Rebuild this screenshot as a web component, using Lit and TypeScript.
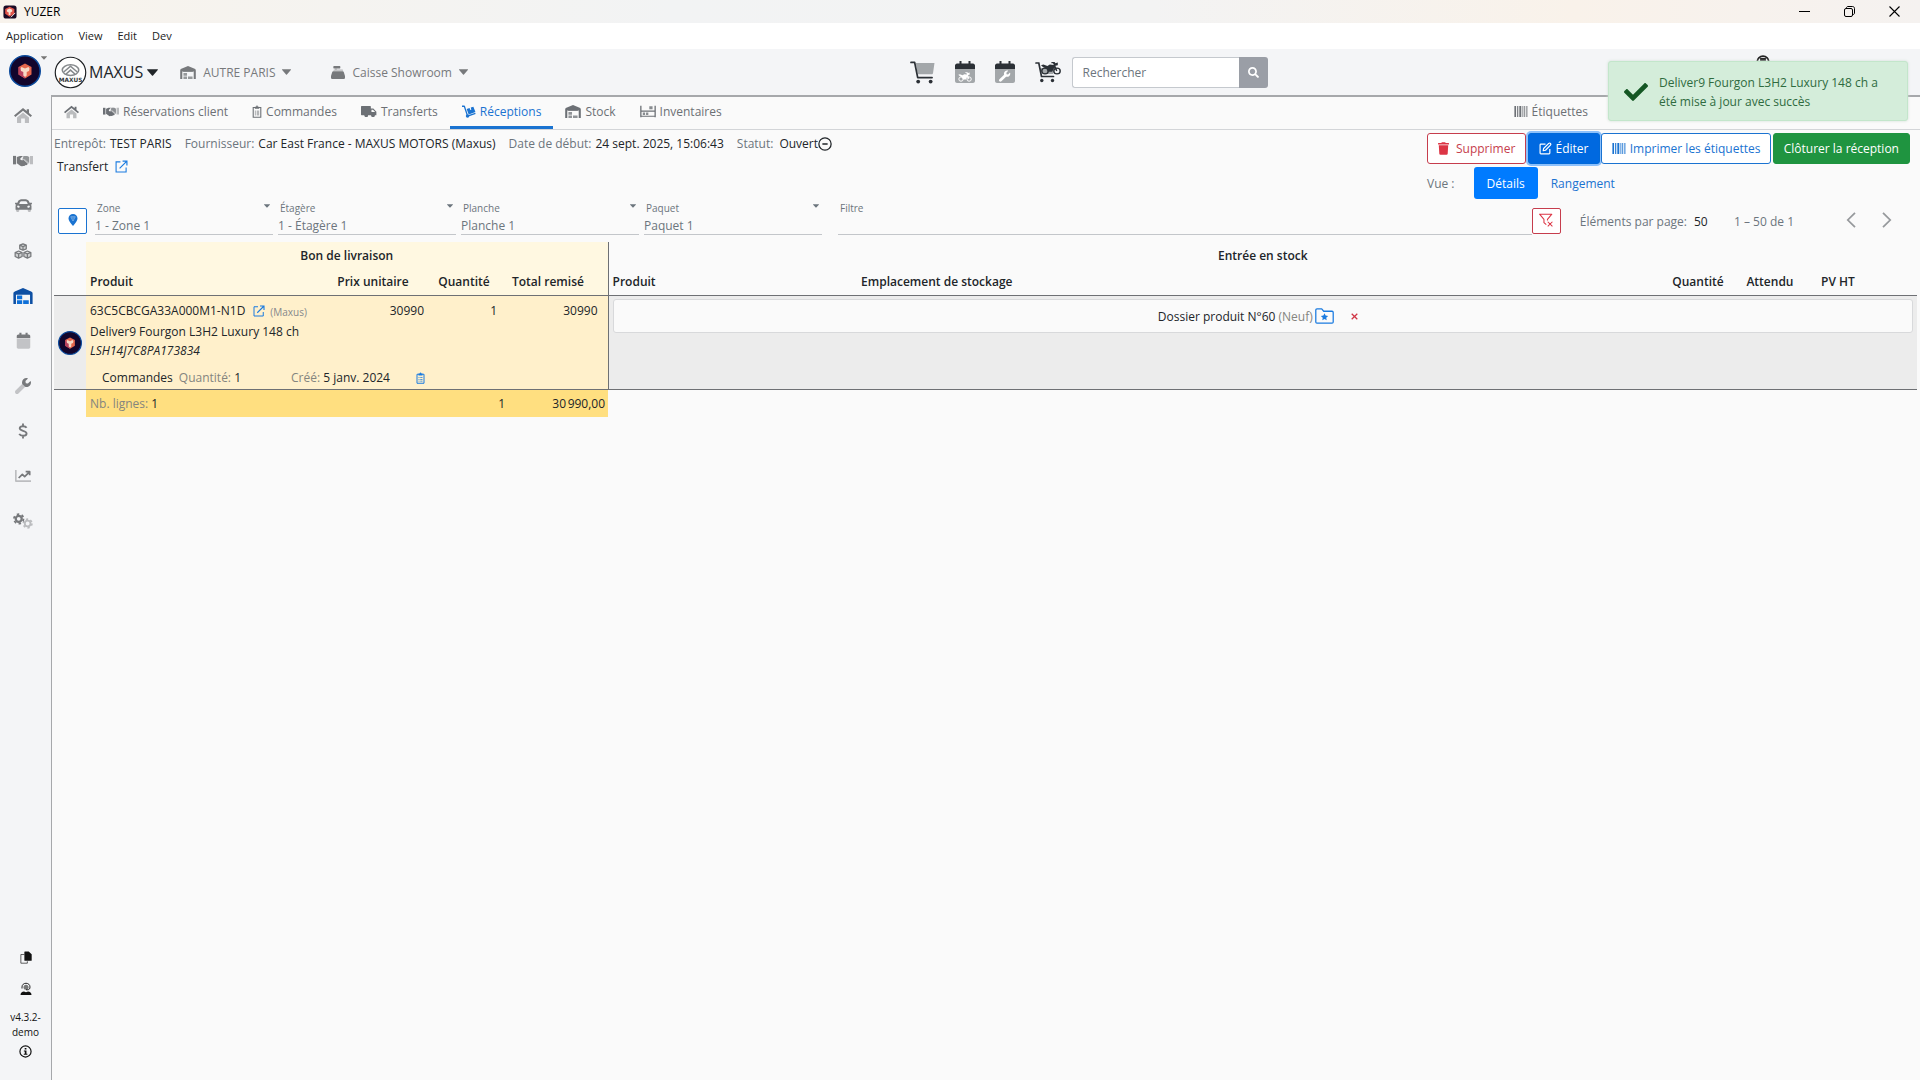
import { LitElement, html, svg, css, TemplateResult } from "lit";
import { customElement, property } from "lit/decorators.js";

type Icon = { box: string; body: unknown };

const WRENCH =
  "M507.7 109.1c-2.2-9-13.5-12.1-20.1-5.5l-74.4 74.4-67.9-11.3-11.3-67.9 74.4-74.4c6.6-6.6 3.4-17.9-5.7-20.2-47.4-11.7-99.6.9-136.6 37.9-39.6 39.6-50.6 97.1-34.1 147.2L18.7 402.8c-25 25-25 65.5 0 90.5 25 25 65.5 25 90.5 0l213.2-213.2c50.1 16.7 107.5 5.7 147.4-34.2 37.1-37.1 49.7-89.3 37.9-136.8z";

const motorbike = svg`
  <circle cx="5" cy="14" r="4" fill="none" stroke="currentColor" stroke-width="1.8"/>
  <circle cx="20" cy="14" r="4" fill="none" stroke="currentColor" stroke-width="1.8"/>
  <path d="M0 6l3-1 5 2 3-2 5 .5L15 3h-2V1.5h4L18 3l3-1v4l-3 .5 2.500 7-1.500.8-2.500-4.800-2.500 5.500H9L7 11 2 8z"/>`;

const ICONS: Record<string, Icon> = {
  home: {
    box: "0 0 24 22",
    body: svg`<path opacity=".45" d="M12 7 4 13.500V21h5.500v-6h5v6H20v-7.500z"/>
      <path d="M12 1 0 11l1.800 2L12 4.700 22.200 13 24 11l-4-3.400V2.500h-3v2.600z"/>`,
  },
  hands: {
    box: "0 0 26 16",
    body: svg`<path d="M0 2h4v11H0z"/><path opacity=".45" d="M22 2h4v11h-4zM14 2h4l3 1.500V12h-2l-6-6z"/>
      <path d="M5 3.500 9 2h4L9.500 5.500c-.5 2 2 3 4 1.500l5.500 5c0 2-1.500 2.500-2.500 2-1 1.500-2.500 1.500-3.500 1-1.500 1-3 .5-4-.5L5.500 12H5z"/>
      <path opacity=".6" d="M13.500 2h5l2.500 1.500V11l-6-5-3 1z"/>`,
  },
  car: {
    box: "0 0 512 512",
    body: svg`<path opacity=".45" d="M32 350h96v66a32 32 0 0 1-32 32H64a32 32 0 0 1-32-32zM384 350h96v66a32 32 0 0 1-32 32h-32a32 32 0 0 1-32-32z"/>
      <path fill-rule="evenodd" d="M500 176h-60l-16.500-41.600C406.400 91.600 365.600 64 319.500 64h-127c-46 0-86.900 27.600-104 70.400L71.900 176H12c-7.800 0-13.500 7.300-11.600 14.900l6 24C7.700 220.200 12.500 224 18 224h20c-13.400 11.700-22 28.800-22 48v112h480V272c0-19.200-8.700-36.300-22.100-48H494c5.500 0 10.300-3.800 11.600-9.100l6-24c1.900-7.600-3.800-14.900-11.600-14.900zM148 158c7.300-18.200 25-30 44.500-30h127c19.600 0 37.300 11.800 44.500 30l20 50H128zM96 320a32 32 0 1 1 0-64c19 0 48 29 48 48s-29 16-48 16zm320 0c-19 0-48 3-48-16s29-48 48-48a32 32 0 1 1 0 64z"/>`,
  },
  boxes: {
    box: "0 0 24 22",
    body: svg`<g fill="currentColor" fill-opacity=".3" stroke="currentColor" stroke-width="1.7" stroke-linejoin="round">
      <path d="M12 1.200 16.500 3v5L12 10 7.500 8V3zM7.500 3 12 5l4.500-2M12 5v5"/>
      <path d="M6 11l4.800 2v5.500L6 20.800l-4.800-2.300V13zM1.200 13 6 15l4.800-2M6 15v5.800"/>
      <path d="M18 11l4.800 2v5.500L18 20.800l-4.800-2.300V13zM13.200 13l4.800 2 4.800-2M18 15v5.800"/></g>`,
  },
  warehouse: {
    box: "0 0 24 20",
    body: svg`<path d="M0 20V7c0-1.200.5-2 1.800-2.600L12 0l10.200 4.400C23.500 5 24 5.800 24 7v13h-3.200V8.500H3.200V20z"/>
      <path opacity=".75" d="M4.500 7.500h15V9.200h-15zM5 10.800h5.500V15H5zM5 16h5.500v4H5zM12 16h7v4h-7z"/>`,
  },
  warehouseActive: {
    box: "0 0 24 20",
    body: svg`<path fill="#0d4fa3" d="M0 20V7c0-1.200.5-2 1.800-2.600L12 0l10.200 4.400C23.500 5 24 5.800 24 7v13h-3.200V8.500H3.200V20z"/>
      <path fill="#0d6fd8" d="M4.500 9.500h6.500V14H4.500zM4.500 15.200h6.500V20H4.500zM12.200 15.200h7V20h-7z"/>`,
  },
  calendar: {
    box: "0 0 20 22",
    body: svg`<path opacity=".4" d="M1 9h18v11c0 1-1 2-2 2H3c-1 0-2-1-2-2z"/>
      <path d="M1 8V5c0-1 1-2 2-2h1.500V.5h2.800V3h5.400V.5h2.800V3H17c1 0 2 1 2 2v3z"/>`,
  },
  wrench: {
    box: "0 0 512 512",
    body: svg`<path opacity=".4" d="M236 184 18.700 402.800c-25 25-25 65.500 0 90.500 25 25 65.500 25 90.500 0L328 276z"/>
      <path d="M507.700 109.100c-2.200-9-13.500-12.100-20.100-5.500l-74.400 74.400-67.900-11.300-11.300-67.900 74.400-74.400c6.600-6.600 3.400-17.900-5.700-20.200-47.400-11.700-99.600.9-136.600 37.900-39.600 39.600-50.600 97.100-34.100 147.200l90 91c50.100 16.700 107.500 5.700 147.400-34.200 37.100-37.100 49.700-89.300 37.900-136.800z"/>`,
  },
  dollar: {
    box: "0 0 14 22",
    body: svg`<path fill="none" stroke="currentColor" stroke-width="2.6" d="M12 6.500C11 4.800 9.500 4.300 7 4.300c-3 0-4.600 1-4.600 3 0 4.500 9.600 2.400 9.600 7.200 0 2-1.800 3.200-5 3.200-2.500 0-4.300-.8-5.300-2.700M7 .5v3.800M7 17.700v3.800"/>`,
  },
  chart: {
    box: "0 0 24 20",
    body: svg`<path opacity=".45" d="M0 1h2.500v15.500H24V19H2c-1.200 0-2-.8-2-2z"/>
      <path fill="none" stroke="currentColor" stroke-width="2.6" stroke-linejoin="round" d="M5.500 13 11 7.500l3.500 3.500L21 4.500M16 3.500h6V9"/>`,
  },
  gears: {
    box: "0 0 28 22",
    body: svg`<g fill="none" stroke="currentColor"><circle cx="8" cy="8" r="4.200" stroke-width="3.2"/>
      <circle cx="8" cy="8" r="6.700" stroke-width="2.5" stroke-dasharray="3.500 3.500"/>
      <g opacity=".45"><circle cx="20.500" cy="14.500" r="4" stroke-width="2.6"/>
      <circle cx="20.500" cy="14.500" r="6" stroke-width="2.4" stroke-dasharray="3.140 3.140"/></g></g>`,
  },
  copy: {
    box: "0 0 22 24",
    body: svg`<path fill="none" stroke="currentColor" stroke-width="1.2" d="M8 6.500H1.500v16h12V19"/>
      <path d="M9 1h7l5.500 5v11c0 .6-.4 1-1 1H9c-.6 0-1-.4-1-1V2c0-.6.4-1 1-1z"/>`,
  },
  headset: {
    box: "0 0 24 26",
    body: svg`<path fill="none" stroke="currentColor" stroke-width="1.8" d="M4 12V9c0-4.500 3.500-7.500 8-7.500s8 3 8 7.500c0 3.500-1.500 5.500-5 5.500h-3"/>
      <circle cx="12" cy="9.500" r="5" opacity=".55"/><path d="M1 25c0-4.500 3-7 7-7l4 1.500L16 18c4 0 7 2.500 7 7z"/>`,
  },
  info: {
    box: "0 0 24 24",
    body: svg`<circle cx="12" cy="12" r="10.300" fill="none" stroke="currentColor" stroke-width="2.2"/>
      <path d="M10.500 5.500h3.200v3h-3.200zM9 10h4.800v6H15.500v2H8.800v-2h1.900v-4H9z"/>`,
  },
  register: {
    box: "0 0 24 22",
    body: svg`<path d="M5 0h10c.6 0 1 .4 1 1v2c0 .6-.4 1-1 1H5c-.6 0-1-.4-1-1V1c0-.6.4-1 1-1zM4 9h16c1 0 1.700.5 2 1.500L24 17v3.500c0 .8-.7 1.500-1.500 1.500h-21C.7 22 0 21.300 0 20.500V17l2-6.500C2.300 9.500 3 9 4 9z"/>
      <path opacity=".5" d="M7 4h3v2h10l.8 2H4l1-2h2z"/>`,
  },
  clipboard: {
    box: "0 0 18 24",
    body: svg`<path fill="none" stroke="currentColor" stroke-width="2" d="M2 4.500h14V22.500H2z"/>
      <path d="M5 3h2.500c0-1.200.6-2 1.500-2s1.500.8 1.500 2H13v4H5zM5 10.500h2V12H5zm3.500 0H13V12H8.500zM5 14h2v1.500H5zm3.500 0H13v1.500H8.500zM5 17.500h2V19H5zm3.500 0H13V19H8.500z"/>`,
  },
  truck: {
    box: "0 0 26 20",
    body: svg`<path fill-rule="evenodd" d="M1 1h14c.6 0 1 .4 1 1v3h4l5 5.500V16h-2.500a3 3 0 0 1-6 0h-5a3 3 0 0 1-6 0H1c-.6 0-1-.4-1-1V2c0-.6.4-1 1-1zm16 6v4h6l-3.600-4z"/>
      <circle cx="8.500" cy="16.500" r="2.500"/><circle cx="19.500" cy="16.500" r="2.500"/>`,
  },
  dolly: {
    box: "0 0 24 22",
    body: svg`<path fill="none" stroke="currentColor" stroke-width="2.2" stroke-linejoin="round" d="M0 2h4l5 15M12 18l11-3.800"/>
      <circle cx="9.500" cy="18.500" r="3"/><path d="M8 6.500 13 5l1.200 3.500L16 8l-1-3.700L19.500 3 23 12l-11.500 4z"/>`,
  },
  shelves: {
    box: "0 0 24 20",
    body: svg`<path d="M0 1h2v18H0zM22 1h2v18h-2zM2 8.500h20v1.800H2zM2 16.500h20V18H2z"/>
      <path opacity=".8" d="M14 2h5v4.500h-5zM4 11.500h3.500v4H4zM9 11.500h3.500v4H9z"/>`,
  },
  barcode: {
    box: "0 0 24 20",
    body: svg`<path d="M0 0h3v20H0zM5 0h2v20H5zM9 0h3.500v20H9zM18 0h1.500v20H18z"/><path opacity=".6" d="M14 0h2.500v20H14zM21 0h3v20h-3z"/>`,
  },
  cart: {
    box: "0 0 26 24",
    body: svg`<path fill="#a3a7aa" d="M6 2h19.500l-1.500 10.500c-.1.800-.7 1.300-1.500 1.300H8z"/>
      <path fill="none" stroke="currentColor" stroke-width="1.8" stroke-linecap="round" stroke-linejoin="round" d="M1 1.500h3.800l3.200 15.800h15"/>
      <circle cx="8.500" cy="21.500" r="2"/><circle cx="21.500" cy="21.500" r="2"/>`,
  },
  calBike: {
    box: "0 0 20 22",
    body: svg`<path fill="#a3a7aa" d="M0 8h20v12c0 1-1 2-2 2H2c-1 0-2-1-2-2z"/>
      <path d="M0 8V4.500c0-1 1-2 2-2h2.500V0h2v2.500h7V0h2v2.500H18c1 0 2 1 2 2V8z"/>
      <g color="#fff" fill="#fff" transform="translate(3.300 10.500) scale(.54)">${motorbike}</g>`,
  },
  calWrench: {
    box: "0 0 20 22",
    body: svg`<path fill="#a3a7aa" d="M0 8h20v12c0 1-1 2-2 2H2c-1 0-2-1-2-2z"/>
      <path d="M0 8V4.500c0-1 1-2 2-2h2.500V0h2v2.500h7V0h2v2.500H18c1 0 2 1 2 2V8z"/>
      <path fill="#fff" transform="translate(4 9.500) scale(.022)" d=${WRENCH}/>`,
  },
  cartBike: {
    box: "0 0 26 22",
    body: svg`<path fill="#a3a7aa" d="M5 7h14l-1 6H7z"/>
      <path fill="none" stroke="currentColor" stroke-width="1.7" stroke-linecap="round" d="M1 2h2.800l2.700 13.500h12"/>
      <circle cx="6.800" cy="19.500" r="1.700"/><circle cx="17.500" cy="19.500" r="1.700"/>
      <g transform="translate(6 0) scale(.8 .72)">${motorbike}</g>`,
  },
  search: {
    box: "0 0 512 512",
    body: svg`<path d="M505 442.700L405.300 343c-4.500-4.500-10.600-7-17-7H372c27.600-35.300 44-79.700 44-128C416 93.100 322.900 0 208 0S0 93.100 0 208s93.100 208 208 208c48.300 0 92.700-16.400 128-44v16.300c0 6.400 2.500 12.500 7 17l99.700 99.700c9.400 9.400 24.600 9.400 33.900 0l28.300-28.300c9.400-9.400 9.400-24.600.1-34zM208 336c-70.700 0-128-57.200-128-128 0-70.700 57.200-128 128-128 70.700 0 128 57.200 128 128 0 70.700-57.200 128-128 128z"/>`,
  },
  check: {
    box: "0 0 512 512",
    body: svg`<path d="M173.900 439.400l-166.400-166.400c-10-10-10-26.200 0-36.200l36.200-36.200c10-10 26.200-10 36.200 0L192 312.700 432.100 72.600c10-10 26.200-10 36.200 0l36.200 36.200c10 10 10 26.200 0 36.200l-294.400 294.400c-10 10-26.200 10-36.200 0z"/>`,
  },
  trash: {
    box: "0 0 448 512",
    body: svg`<path d="M432 32H312l-9.400-18.700A24 24 0 0 0 281.100 0H166.800a23.700 23.700 0 0 0-21.400 13.300L136 32H16A16 16 0 0 0 0 48v32a16 16 0 0 0 16 16h416a16 16 0 0 0 16-16V48a16 16 0 0 0-16-16zM53.200 467a48 48 0 0 0 47.900 45h245.800a48 48 0 0 0 47.900-45L416 128H32z"/>`,
  },
  edit: {
    box: "0 0 24 24",
    body: svg`<path fill="none" stroke="currentColor" stroke-width="2.2" stroke-linejoin="round" d="M12 4H3.500C2.500 4 2 4.500 2 5.500v15c0 1 .5 1.500 1.500 1.500h15c1 0 1.500-.5 1.500-1.500V13M8.500 12 18 2.500c1-1 2-.8 3 .2s1.200 2 .2 3L12 15.200l-4.200.7z"/>`,
  },
  external: {
    box: "0 0 24 24",
    body: svg`<path fill="none" stroke="currentColor" stroke-width="2" d="M10 3.500H2V22h18.500v-8"/>
      <path fill="none" stroke="currentColor" stroke-width="2.2" d="M8.500 15.500 21 3M14 2h8v8"/>`,
  },
  minus: {
    box: "0 0 24 24",
    body: svg`<path fill="none" stroke="currentColor" stroke-width="2.2" d="M12 1.500a10.500 10.500 0 1 0 0 21 10.500 10.500 0 0 0 0-21zM7.500 12h9"/>`,
  },
  pin: {
    box: "0 0 18 24",
    body: svg`<path d="M9 0a9 9 0 0 1 9 9c0 4-3.500 8-9 15C3.500 17 0 13 0 9a9 9 0 0 1 9-9z"/>
      <path fill="none" stroke="#fff" stroke-opacity=".6" stroke-width="1.2" d="M4.500 5.500h9L9 14zM7 8h4"/>`,
  },
  filterX: {
    box: "0 0 24 24",
    body: svg`<path fill="none" stroke="currentColor" stroke-width="1.8" stroke-linejoin="round" d="M12.500 20 8.500 16.500V11L1 2h21l-7.500 9v2M15 15l8 8M23 15l-8 8"/>`,
  },
  folder: {
    box: "0 0 24 20",
    body: svg`<path fill="none" stroke="currentColor" stroke-width="1.6" stroke-linejoin="round" d="M1 2.500C1 1.500 1.500 1 2.500 1h6L11 4h10.500c1 0 1.500.5 1.500 1.500v12c0 1-.5 1.500-1.500 1.500h-19c-1 0-1.500-.5-1.500-1.500z"/>
      <path d="m12 6.500 1.400 3 3.200.4-2.400 2.300.6 3.200-2.800-1.600-2.800 1.600.6-3.200-2.400-2.300 3.200-.4z"/>`,
  },
  times: { box: "0 0 10 10", body: svg`<path fill="none" stroke="currentColor" stroke-width="1.8" d="m1 1 8 8M9 1 1 9"/>` },
  prev: { box: "0 0 12 20", body: svg`<path fill="none" stroke="currentColor" stroke-width="2.2" d="M11 1 2 10l9 9"/>` },
  next: { box: "0 0 12 20", body: svg`<path fill="none" stroke="currentColor" stroke-width="2.2" d="m1 1 9 9-9 9"/>` },
  caret: { box: "0 0 10 6", body: svg`<path d="M.5 0h9c.5 0 .6.500.3.800L5.500 5.700c-.3.300-.7.300-1 0L.2.800C-.1.500 0 0 .5 0z"/>` },
  user: {
    box: "0 0 24 24",
    body: svg`<path fill="none" stroke="currentColor" stroke-width="3" d="M12 2a10 10 0 1 0 0 20 10 10 0 0 0 0-20z"/><path d="M7 5h10v5H7z"/>`,
  },
  winMin: { box: "0 0 11 11", body: svg`<path d="M0 5h11v1H0z"/>` },
  winMax: {
    box: "0 0 11 11",
    body: svg`<g fill="none" stroke="currentColor"><rect x=".5" y="2.500" width="8" height="8" rx="1.500"/><path d="M2.500 2V1.800C2.500 1 3.200.5 4 .5h4.500c1.200 0 2 .8 2 2V7c0 .8-.5 1.500-1.500 1.500"/></g>`,
  },
  winClose: { box: "0 0 11 11", body: svg`<path fill="none" stroke="currentColor" stroke-width="1.1" d="m.5.5 10 10M10.500.5l-10 10"/>` },
  gem: {
    box: "0 0 32 32",
    body: svg`<circle cx="16" cy="16" r="15.200" fill="#12052c" stroke="#0b4a9c" stroke-width="1.6"/>
      <path fill="#e5674d" d="M16 8.500 22.500 12v7.500L16 23.500l-6.500-4V12z"/><path fill="#b8415f" d="M9.500 12v7.500l6.500 4v-8z"/>
      <path fill="#f6d9c6" d="m12.500 12 3.500 1.500 3.500-1.500 1 1.500-.5 2.500-2.300 1v3.500L16 22l-1.700-1.500V17L12 16l-.5-2.500z"/>`,
  },
  gemSquare: {
    box: "0 0 16 16",
    body: svg`<rect width="15" height="15" x=".5" y=".5" rx="3" fill="#1a0a24"/><path fill="#e2554b" d="M7.500 2 13 4.500v5.500L7.500 13.500 2.500 10V4.500z"/>
      <path fill="#f7e2d4" d="m7.500 4 3 1.500v2L8.500 8.500v3h-2v-3l-2-1v-2z"/><path stroke="#fff" stroke-width="1" d="m9 14 5-5"/>`,
  },
  maxus: {
    box: "0 0 34 34",
    body: svg`<circle cx="17" cy="17" r="15.700" fill="#fff" stroke="#1c1f22" stroke-width="1.2"/>
      <g fill="none" stroke="#85898c"><ellipse cx="17" cy="14.500" rx="8.500" ry="5.500" stroke-width="1.6"/><path stroke-width="1.6" d="M10 16.500 17 10.500l7 6M12.500 18.500l4.500-4 4.500 4"/></g>
      <text x="17" y="27" text-anchor="middle" font-family="DejaVu Sans, sans-serif" font-weight="700" font-size="6" fill="#33373a">MAXUS</text>`,
  },
};

const icon = (name: string, width: number, height = width): TemplateResult => {
  const i = ICONS[name];
  return html`<svg class="ico" viewBox=${i.box} width=${width} height=${height} fill="currentColor" aria-hidden="true">${i.body}</svg>`;
};

const base = css`
  :host { display: block; font-family: "Open Sans", "Noto Sans", sans-serif; font-size: 12px; line-height: 19px; color: #212529; }
  * { box-sizing: border-box; }
  a { color: inherit; text-decoration: none; }
  button, input, select { font: inherit; color: inherit; margin: 0; }
  button { padding: 0; border: 0; background: none; cursor: pointer; white-space: nowrap; }
  .ico { display: block; flex: none; }
`;

@customElement("window-bar")
class WindowBar extends LitElement {
  static styles = [base, css`
    .title { display: flex; align-items: center; height: 23px; padding: 0 14px 0 3px; gap: 7px;
      background: linear-gradient(90deg, #f8f3ec 0, #f2f3f4 35%, #f3f3f3 60%, #f9f2ea 82%, #f5f2f0 100%); font-size: 12px; line-height: 16px; color: #000; }
    .controls { display: flex; gap: 34px; margin-left: auto; padding-right: 6px; }
    .menu { display: flex; align-items: center; gap: 15px; height: 26px; padding: 0 6px; background: #fff; font-size: 11px; line-height: 16px; color: #222; }
  `];
  render() {
    return html`
      <div class="title">${icon("gemSquare", 14)}<span>YUZER</span>
        <div class="controls">
          <button aria-label="Réduire">${icon("winMin", 11)}</button>
          <button aria-label="Restaurer">${icon("winMax", 11)}</button>
          <button aria-label="Fermer">${icon("winClose", 11)}</button>
        </div>
      </div>
      <nav class="menu">${["Application", "View", "Edit", "Dev"].map((m) => html`<button>${m}</button>`)}</nav>`;
  }
}

@customElement("side-bar")
class SideBar extends LitElement {
  static styles = [base, css`
    :host { display: flex; flex-direction: column; background: #f4f5f7; color: #77797c; }
    .brand { display: flex; padding: 6px 0 0 9px; height: 44px; }
    .brand .ico:last-child { margin-top: 1px; color: #777; }
    .links { display: flex; flex-direction: column; padding-right: 5px; }
    .links a { display: grid; place-items: center; height: 45px; }
    .foot { display: flex; flex-direction: column; align-items: center; margin-top: auto; padding-bottom: 21px; color: #111; font-size: 10px; line-height: 15px; text-align: center; }
    .foot button { display: grid; place-items: center; height: 32px; }
    .foot p { margin: 5px 0 4px; }
    .foot .about { height: 15px; }
  `];
  render() {
    const links: [string, string, number, number][] = [
      ["Accueil", "home", 18, 17], ["Clients", "hands", 20, 13], ["Véhicules", "car", 17, 17], ["Produits", "boxes", 18, 16],
      ["Stock", "warehouseActive", 20, 16], ["Agenda", "calendar", 15, 17], ["Atelier", "wrench", 16, 16], ["Finance", "dollar", 10, 16],
      ["Statistiques", "chart", 16, 14], ["Réglages", "gears", 20, 16],
    ];
    return html`
      <button class="brand" aria-label="Yuzer">${icon("gem", 32)}${icon("caret", 6, 4)}</button>
      <nav class="links">${links.map(([l, n, w, h]) => html`<a href="#" aria-label=${l}>${icon(n, w, h)}</a>`)}</nav>
      <div class="foot">
        <button aria-label="Copier">${icon("copy", 12, 13)}</button>
        <button aria-label="Support">${icon("headset", 12, 14)}</button>
        <p>v4.3.2-<br />demo</p>
        <button class="about" aria-label="À propos">${icon("info", 13)}</button>
      </div>`;
  }
}

@customElement("top-bar")
class TopBar extends LitElement {
  static styles = [base, css`
    :host { display: flex; align-items: center; height: 46px; padding: 0 6px 0 3px; background: #f4f5f7; color: #77797c; }
    button { display: flex; align-items: center; }
    .left { flex: 0 0 46%; display: flex; align-items: center; }
    .brand { gap: 2px; font-size: 16px; color: #212529; margin-right: 22px; }
    .brand .ico:last-child { margin-left: 2px; }
    .site { gap: 7px; margin-right: 40px; }
    .mid { display: flex; align-items: center; gap: 20px; color: #2b3036; }
    .search { display: flex; margin-left: -9px; }
    .search input { width: 167px; height: 31px; padding: 0 10px; border: 1px solid #c5c9ce; border-right: 0; border-radius: 3px 0 0 3px; background: #fff; }
    .search input::placeholder { color: #6c757d; opacity: 1; }
    .search button { justify-content: center; width: 29px; height: 31px; border-radius: 0 3px 3px 0; background: #9a9ea6; color: #fff; }
    .right { flex: 1; display: flex; justify-content: flex-end; padding-right: 144px; color: #222; }
    .right button { align-items: flex-start; height: 34px; }
  `];
  render() {
    return html`
      <div class="left">
        <button class="brand">${icon("maxus", 33)}<span>MAXUS</span>${icon("caret", 11, 7)}</button>
        <button class="site">${icon("warehouse", 16, 13)}<span>AUTRE PARIS</span>${icon("caret", 9, 6)}</button>
        <button class="site">${icon("register", 14, 13)}<span>Caisse Showroom</span>${icon("caret", 9, 6)}</button>
      </div>
      <div class="mid">
        <button aria-label="Panier">${icon("cart", 25, 23)}</button>
        <button aria-label="Agenda véhicules">${icon("calBike", 20, 22)}</button>
        <button aria-label="Agenda atelier">${icon("calWrench", 20, 22)}</button>
        <button aria-label="Vente véhicule">${icon("cartBike", 26, 22)}</button>
        <form class="search"><input type="text" aria-label="Rechercher" placeholder="Rechercher" /><button type="button" aria-label="Lancer la recherche">${icon("search", 11)}</button></form>
      </div>
      <div class="right"><button aria-label="Compte">${icon("user", 14)}</button></div>`;
  }
}

@customElement("tab-bar")
class TabBar extends LitElement {
  static styles = [base, css`
    :host { display: flex; height: 33px; border-bottom: 1px solid #d3d5d8; color: #6c7075; }
    a { display: flex; align-items: center; gap: 4px; padding: 0 12px; border-bottom: 3px solid transparent; }
    .active { color: #1a73d1; border-color: #1a73d1; }
    .end { margin-left: auto; margin-right: 320px; }
  `];
  render() {
    const tabs: [string, string, number, number][] = [
      ["", "home", 15, 14], ["Réservations client", "hands", 16, 11], ["Commandes", "clipboard", 10, 13], ["Transferts", "truck", 16, 13],
      ["Réceptions", "dolly", 14, 13], ["Stock", "warehouse", 16, 13], ["Inventaires", "shelves", 16, 13],
    ];
    return html`${tabs.map(([t, n, w, h]) => html`<a href="#" class=${t === "Réceptions" ? "active" : ""} aria-label=${t || "Accueil"}>${icon(n, w, h)}${t ? html`<span>${t}</span>` : ""}</a>`)}
      <a href="#" class="end">${icon("barcode", 14, 11)}<span>Étiquettes</span></a>`;
  }
}

@customElement("reception-head")
class ReceptionHead extends LitElement {
  static styles = [base, css`
    :host { display: flex; justify-content: space-between; align-items: flex-start; padding: 3px 10px 0 2px; }
    .facts { display: flex; gap: 13px; margin: 0; padding-top: 1px; }
    .facts div { display: flex; align-items: center; gap: 4px; }
    dt { color: #6c757d; }
    dd { display: flex; align-items: center; margin: 0; }
    .facts div:last-child { gap: 6px; }
    .link { display: flex; align-items: center; gap: 7px; margin: 4px 0 0 3px; }
    .link a { color: #1a7be0; }
    .side { display: flex; flex-direction: column; gap: 3px; width: 483px; }
    .actions { display: flex; justify-content: space-between; white-space: nowrap; }
    .btn { display: flex; align-items: center; gap: 4px; height: 31px; padding: 0 10px; border: 1px solid; border-radius: 3px; background: #fff; }
    .danger { color: #c63d4d; gap: 7px; }
    .danger .ico { color: #dc3545; }
    .edit { border-color: #0069d9; background: #0069e0; color: #fff; box-shadow: 0 0 0 2px #8cc0fb; }
    .outline { color: #1a73d1; }
    .success { border-color: #1f9440; background: #1f9440; color: #fff; }
    .view { display: flex; align-items: center; color: #6c757d; }
    .view button { height: 32px; padding: 0 13px; border-radius: 3px; color: #1a73d1; }
    .view .on { margin-left: 19px; background: #007bff; color: #fff; }
  `];
  render() {
    return html`
      <div>
        <dl class="facts">
          <div><dt>Entrepôt:</dt><dd>TEST PARIS</dd></div>
          <div><dt>Fournisseur:</dt><dd>Car East France - MAXUS MOTORS (Maxus)</dd></div>
          <div><dt>Date de début:</dt><dd>24 sept. 2025, 15:06:43</dd></div>
          <div><dt>Statut:</dt><dd>Ouvert${icon("minus", 14)}</dd></div>
        </dl>
        <div class="link">Transfert <a href="#" aria-label="Ouvrir le transfert">${icon("external", 13)}</a></div>
      </div>
      <div class="side">
        <div class="actions">
          <button class="btn danger">${icon("trash", 11, 13)}Supprimer</button>
          <button class="btn edit">${icon("edit", 13)}Éditer</button>
          <button class="btn outline">${icon("barcode", 14, 11)}Imprimer les étiquettes</button>
          <button class="btn success">Clôturer la réception</button>
        </div>
        <div class="view"><span>Vue :</span><button class="on">Détails</button><button>Rangement</button></div>
      </div>`;
  }
}

@customElement("select-field")
class SelectField extends LitElement {
  @property() label = "";
  @property() value = "";
  static styles = [base, css`
    :host { flex: 1; border-bottom: 1px solid #c3c6ca; color: #6c757d; }
    .top { display: flex; justify-content: space-between; padding: 0 3px 0 2px; font-size: 10px; line-height: 17px; }
    .top .ico { margin-top: 4px; }
    select { display: block; width: 100%; height: 17px; line-height: 17px; padding: 0; border: 0; background: none; appearance: none; }
  `];
  render() {
    return html`<div class="top"><label for="f">${this.label}</label>${icon("caret", 6, 4)}</div>
      <select id="f"><option>${this.value}</option></select>`;
  }
}

@customElement("filter-row")
class FilterRow extends LitElement {
  static styles = [base, css`
    :host { display: flex; align-items: flex-end; padding: 0 28px 0 6px; color: #6c757d; }
    .square { display: grid; place-items: center; width: 29px; height: 26px; margin-bottom: 1px; padding-bottom: 2px; border: 1px solid #1a73d1; border-radius: 2px; background: #fff; color: #1a73d1; }
    .square.clear { border-color: #c63d4d; color: #dc3545; }
    .fields { flex: 0 1 727px; display: flex; gap: 5px; margin-left: 8px; }
    .text { flex: 1; margin-left: 16px; border-bottom: 1px solid #c3c6ca; }
    .text label { display: block; padding-left: 2px; font-size: 10px; line-height: 17px; }
    .text input { display: block; width: 100%; height: 17px; padding: 0; border: 0; background: none; outline: 0; }
    .pager { display: flex; align-items: center; height: 27px; margin-left: 19px; }
    .pager select { appearance: none; margin: 0 26px 0 7px; padding: 0; border: 0; background: none; color: #212529; }
    .pager .nav { color: #96999c; margin-left: 26px; margin-bottom: 4px; }
    .pager .first { margin-left: 52px; }
  `];
  render() {
    return html`
      <button class="square" aria-label="Emplacement">${icon("pin", 10, 12)}</button>
      <div class="fields">
        <select-field label="Zone" value="1 - Zone 1"></select-field>
        <select-field label="Étagère" value="1 - Étagère 1"></select-field>
        <select-field label="Planche" value="Planche 1"></select-field>
        <select-field label="Paquet" value="Paquet 1"></select-field>
      </div>
      <div class="text"><label for="filtre">Filtre</label><input id="filtre" type="text" /></div>
      <button class="square clear" aria-label="Effacer les filtres">${icon("filterX", 14)}</button>
      <div class="pager">
        <label for="size">Éléments par page:</label><select id="size"><option>50</option></select><span>1 – 50 de 1</span>
        <button class="nav first" aria-label="Page précédente">${icon("prev", 10, 16)}</button>
        <button class="nav" aria-label="Page suivante">${icon("next", 10, 16)}</button>
      </div>`;
  }
}

@customElement("stock-table")
class StockTable extends LitElement {
  static styles = [base, css`
    :host { padding: 7px 3px 0 2px; }
    table { width: 100%; table-layout: fixed; border-collapse: collapse; }
    th, td { padding: 0 4px; text-align: left; vertical-align: top; white-space: nowrap; }
    th { font-weight: 600; line-height: 27px; }
    thead tr + tr th { border-bottom: 1px solid #6e7074; line-height: 26px; }
    thead .y { background: #fff8e1; }
    .mark { width: 32px; } .product { width: 232px; } .price { width: 110px; } .qty { width: 80px; } .total { width: 100px; }
    .item { width: 249px; } .sm { width: 72px; } .pv { width: 64px; } .tail { width: 47px; }
    .c { text-align: center; }
    .r { text-align: right; }
    .edge { border-right: 1px solid #6e7074; }
    .hq { padding-right: 12px; } .ht { padding-right: 26px; }
    .line td { height: 94px; background: #ececec; border-bottom: 1px solid #6e7074; }
    .line .y { background: #fff0cb; padding-top: 5px; }
    .line .logo { padding: 35px 0 0 4px; }
    .bq { padding-right: 11px; } .bt { padding-right: 10px; }
    .prod div { display: flex; align-items: center; }
    .ref { gap: 8px; height: 21px; padding-bottom: 2px; }
    .ref a, .order a { color: #1a7be0; }
    .ref small { margin-left: -3px; padding-top: 4px; font-size: 10px; color: #85888c; }
    .order { gap: 6px; margin: 8px 0 0 12px; }
    .order .made { margin-left: 44px; }
    .order a { margin-left: 20px; }
    .dim { color: #84857f; }
    .line .stock { padding: 3px 4px 0; }
    .card { display: flex; align-items: center; justify-content: center; height: 34px; border: 1px solid #d8d9db; border-radius: 3px; background: #fafafa; padding-right: 10px; }
    .card a { margin-left: 2px; color: #1a7be0; }
    .card button { margin-left: 17px; color: #d03545; }
    tfoot td { height: 27px; line-height: 27px; }
    tfoot .y { background: #ffdf80; }
    tfoot .r { padding-right: 3px; }
  `];
  render() {
    return html`
      <table>
        <colgroup><col class="mark" /><col class="product" /><col class="price" /><col class="qty" /><col class="total" /><col class="item" /><col /><col class="sm" /><col class="sm" /><col class="pv" /><col class="tail" /></colgroup>
        <thead>
          <tr><th></th><th class="y c edge" colspan="4">Bon de livraison</th><th class="c" colspan="6">Entrée en stock</th></tr>
          <tr><th></th><th class="y">Produit</th><th class="y c">Prix unitaire</th><th class="y c hq">Quantité</th><th class="y c ht edge">Total remisé</th>
            <th>Produit</th><th>Emplacement de stockage</th><th class="c">Quantité</th><th class="c">Attendu</th><th class="c">PV HT</th><th></th></tr>
        </thead>
        <tbody>
          <tr class="line">
            <td class="logo">${icon("gem", 24)}</td>
            <td class="y prod">
              <div class="ref"><span>63C5CBCGA33A000M1-N1D</span><a href="#" aria-label="Ouvrir le produit">${icon("external", 12)}</a><small>(Maxus)</small></div>
              <div>Deliver9 Fourgon L3H2 Luxury 148 ch</div>
              <div><i>LSH14J7C8PA173834</i></div>
              <div class="order"><span>Commandes</span><span><span class="dim">Quantité:</span> 1</span><span class="made"><span class="dim">Créé:</span> 5 janv. 2024</span><a href="#" aria-label="Voir la commande">${icon("clipboard", 9, 12)}</a></div>
            </td>
            <td class="y r">30990</td>
            <td class="y r bq">1</td>
            <td class="y r bt edge">30990</td>
            <td class="stock" colspan="6">
              <div class="card"><span>Dossier produit N°60 <span class="dim">(Neuf)</span></span><a href="#" aria-label="Ouvrir le dossier">${icon("folder", 19, 16)}</a><button aria-label="Retirer">${icon("times", 7)}</button></div>
            </td>
          </tr>
        </tbody>
        <tfoot>
          <tr><td></td><td class="y" colspan="2"><span class="dim">Nb. lignes:</span> 1</td><td class="y r">1</td><td class="y r">30&#8239;990,00</td><td colspan="6"></td></tr>
        </tfoot>
      </table>`;
  }
}

@customElement("app-root")
class AppRoot extends LitElement {
  static styles = [base, css`
    :host { display: flex; flex-direction: column; min-height: 100vh; position: relative; background: #fafafa; }
    .body { flex: 1; display: flex; }
    side-bar { flex: 0 0 51px; }
    .main { flex: 1; min-width: 0; display: flex; flex-direction: column; background: #f4f5f7; }
    .page { flex: 1; border: solid #a6a8ab; border-width: 2px 0 0 1px; background: #fafafa; }
    filter-row { margin-top: 1px; }
    .toast { position: absolute; top: 61px; right: 12px; width: 300px; display: flex; align-items: center; gap: 11px; padding: 11px 15px 9px; border: 1px solid #c3e6cb; border-radius: 3px; background: #d4edda; color: #2f6b3f; box-shadow: 0 0 3px #d0ded4; }
    .toast .ico { color: #155724; }
    .toast p { margin: 0; }
  `];
  render() {
    return html`
      <window-bar></window-bar>
      <div class="body">
        <side-bar></side-bar>
        <div class="main">
          <top-bar></top-bar>
          <div class="page">
            <tab-bar></tab-bar>
            <reception-head></reception-head>
            <filter-row></filter-row>
            <stock-table></stock-table>
          </div>
        </div>
      </div>
      <div class="toast" role="status">${icon("check", 24)}<p>Deliver9 Fourgon L3H2 Luxury 148 ch a été mise à jour avec succès</p></div>`;
  }
}
